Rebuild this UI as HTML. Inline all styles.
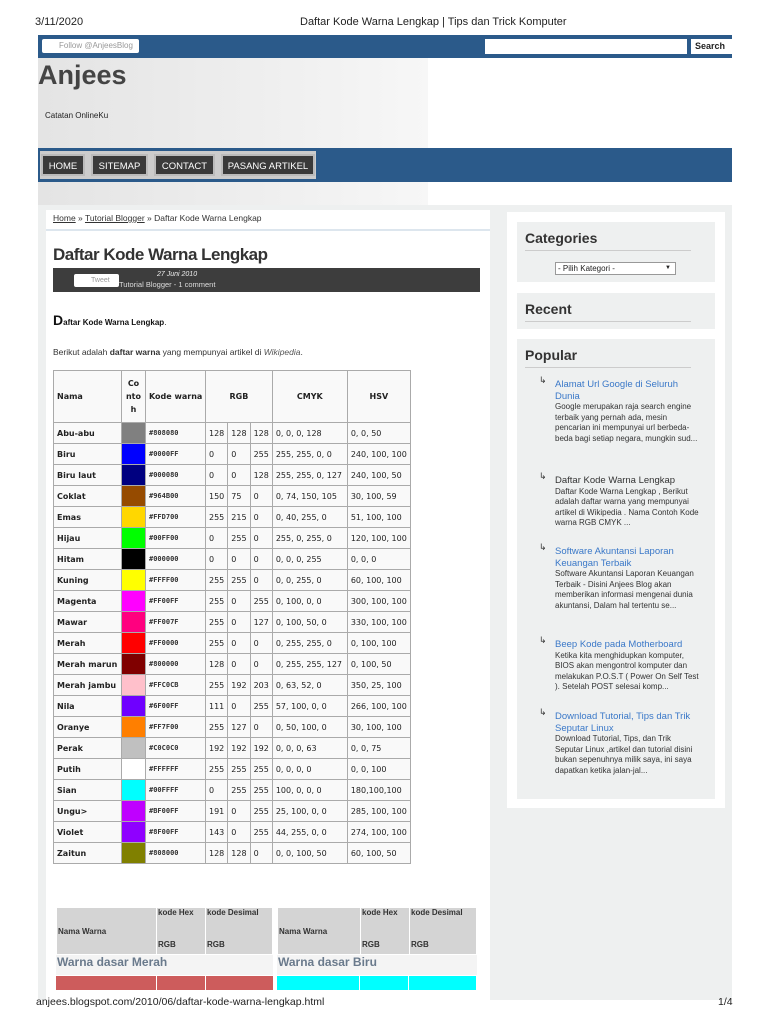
<!DOCTYPE html>
<html><head><meta charset="utf-8"><style>
*{margin:0;padding:0;box-sizing:border-box}
body{width:768px;height:1024px;background:#fff;font-family:"Liberation Sans",sans-serif;position:relative;overflow:hidden;color:#222}
.a{position:absolute}
.hdr{font-size:11px;top:16px}
#top{left:38px;top:35px;width:694px;height:23px;background:#2b5a8a}
#hbg{left:38px;top:58px;width:390px;height:147px;background:linear-gradient(90deg,#e4e4e4,#efefef 60%,#f7f7f7)}
#nav{left:38px;top:148px;width:694px;height:34px;background:#2b5a8a}
.nb{position:absolute;top:6px;height:22px;background:#3a3a3a;color:#fff;font-size:9.5px;line-height:22px;text-align:center;border:2px solid #bbb}
#main{left:38px;top:205px;width:694px;height:795px;background:#eef0f0}
#content{left:46px;top:210px;width:444px;height:790px;background:#fff}
#side{left:507px;top:212px;width:218px;height:596px;background:#fff}
.box{position:absolute;left:10px;width:198px;background:#eef0f0}
.box h3{font-size:14px;font-weight:bold;color:#333;margin:8px 0 0 8px;padding-bottom:4px;border-bottom:1px solid #ccc;width:166px}
table.c{position:absolute;left:53px;top:370px;border-collapse:collapse;font-family:"DejaVu Sans",sans-serif;font-size:8px;background:#f9f9f9}
table.c td{border:1px solid #aaa;height:21px;padding:0 3px;white-space:nowrap}
table.c td:first-child{font-weight:bold}
table.c th{border:1px solid #aaa;font-weight:bold;font-size:8px;height:52px}
.k{font-family:"DejaVu Sans Mono",monospace;font-size:7px;font-weight:bold;color:#333}
.p{position:absolute;left:38px;font-size:8px;color:#333;line-height:10.5px;width:145px}
.p b{display:block;font-weight:normal;color:#3a78c8;font-size:9.5px;line-height:11.5px}
.p i{position:absolute;left:-16px;top:-4px;font-style:normal;font-size:9px;color:#333}
.bt{position:absolute;border-collapse:collapse;font-size:8px;font-weight:bold;color:#333}
.bt td{background:#d4d4d4;border:1px solid #fff;vertical-align:middle;padding:0 1px}
</style></head><body>
<div class="a hdr" style="left:35px">3/11/2020</div>
<div class="a hdr" style="left:300px">Daftar Kode Warna Lengkap | Tips dan Trick Komputer</div>
<div class="a" id="top"></div>
<div class="a" style="left:42px;top:39px;width:97px;height:14px;background:#fff;border-radius:2px;font-size:8px;color:#999;line-height:14px;padding-left:17px">Follow @AnjeesBlog</div>
<div class="a" style="left:485px;top:39px;width:202px;height:15px;background:#fff"></div>
<div class="a" style="left:691px;top:39px;width:41px;height:15px;background:#fff;font-size:9px;font-weight:bold;line-height:15px;padding-left:4px">Search</div>
<div class="a" id="hbg"></div>
<div class="a" style="left:38px;top:60px;font-size:27px;font-weight:bold;color:#444">Anjees</div>
<div class="a" style="left:45px;top:111px;font-size:8px;color:#222">Catatan OnlineKu</div>
<div class="a" id="nav">
<div style="position:absolute;left:2px;top:3px;width:276px;height:28px;background:#ccc"></div>
<div class="nb" style="left:3px;width:44px">HOME</div>
<div class="nb" style="left:53px;width:57px">SITEMAP</div>
<div class="nb" style="left:116px;width:61px">CONTACT</div>
<div class="nb" style="left:183px;width:94px">PASANG ARTIKEL</div>
</div>
<div class="a" id="main"></div>
<div class="a" id="content"></div>
<div class="a" style="left:53px;top:213px;font-size:8.5px;color:#333"><u>Home</u> » <u>Tutorial Blogger</u> » Daftar Kode Warna Lengkap</div>
<div class="a" style="left:46px;top:229px;width:444px;height:2px;background:#dde6ee"></div>
<div class="a" style="left:53px;top:245px;font-size:17px;font-weight:bold;color:#333;letter-spacing:-0.5px">Daftar Kode Warna Lengkap</div>
<div class="a" style="left:53px;top:268px;width:427px;height:24px;background:#3d3d3d"></div>
<div class="a" style="left:74px;top:274px;width:45px;height:13px;background:#fff;border-radius:2px;font-size:7px;color:#999;padding-left:17px;line-height:13px">Tweet</div>
<div class="a" style="left:157px;top:271px;font-size:7px;color:#eee;font-style:italic">27 Juni 2010</div>
<div class="a" style="left:119px;top:280px;font-size:7.5px;color:#ddd">Tutorial Blogger - 1 comment</div>
<div class="a" style="left:53px;top:312px;font-size:8px;font-weight:bold;color:#111"><span style="font-size:14px">D</span>aftar Kode Warna Lengkap<span style="font-weight:normal">.</span></div>
<div class="a" style="left:53px;top:347px;font-size:8.5px;color:#333">Berikut adalah <b>daftar warna</b> yang mempunyai artikel di <i style="color:#555">Wikipedia</i>.</div>
<table class="c">
<tr><th style="width:68px;text-align:left;padding-left:3px">Nama</th><th style="width:24px;line-height:13px">Co<br>nto<br>h</th><th style="width:60px;text-align:left;padding-left:3px">Kode warna</th><th colspan="3" style="width:66px">RGB</th><th style="width:75px">CMYK</th><th style="width:62px">HSV</th></tr>
<tr><td>Abu-abu</td><td style="background:#808080"></td><td class="k">#808080</td><td>128</td><td>128</td><td>128</td><td>0, 0, 0, 128</td><td>0, 0, 50</td></tr>
<tr><td>Biru</td><td style="background:#0000ff"></td><td class="k">#0000FF</td><td>0</td><td>0</td><td>255</td><td>255, 255, 0, 0</td><td>240, 100, 100</td></tr>
<tr><td>Biru laut</td><td style="background:#000080"></td><td class="k">#000080</td><td>0</td><td>0</td><td>128</td><td>255, 255, 0, 127</td><td>240, 100, 50</td></tr>
<tr><td>Coklat</td><td style="background:#964b00"></td><td class="k">#964B00</td><td>150</td><td>75</td><td>0</td><td>0, 74, 150, 105</td><td>30, 100, 59</td></tr>
<tr><td>Emas</td><td style="background:#ffd700"></td><td class="k">#FFD700</td><td>255</td><td>215</td><td>0</td><td>0, 40, 255, 0</td><td>51, 100, 100</td></tr>
<tr><td>Hijau</td><td style="background:#00ff00"></td><td class="k">#00FF00</td><td>0</td><td>255</td><td>0</td><td>255, 0, 255, 0</td><td>120, 100, 100</td></tr>
<tr><td>Hitam</td><td style="background:#000"></td><td class="k">#000000</td><td>0</td><td>0</td><td>0</td><td>0, 0, 0, 255</td><td>0, 0, 0</td></tr>
<tr><td>Kuning</td><td style="background:#ffff00"></td><td class="k">#FFFF00</td><td>255</td><td>255</td><td>0</td><td>0, 0, 255, 0</td><td>60, 100, 100</td></tr>
<tr><td>Magenta</td><td style="background:#ff00ff"></td><td class="k">#FF00FF</td><td>255</td><td>0</td><td>255</td><td>0, 100, 0, 0</td><td>300, 100, 100</td></tr>
<tr><td>Mawar</td><td style="background:#ff007f"></td><td class="k">#FF007F</td><td>255</td><td>0</td><td>127</td><td>0, 100, 50, 0</td><td>330, 100, 100</td></tr>
<tr><td>Merah</td><td style="background:#ff0000"></td><td class="k">#FF0000</td><td>255</td><td>0</td><td>0</td><td>0, 255, 255, 0</td><td>0, 100, 100</td></tr>
<tr><td>Merah marun</td><td style="background:#800000"></td><td class="k">#800000</td><td>128</td><td>0</td><td>0</td><td>0, 255, 255, 127</td><td>0, 100, 50</td></tr>
<tr><td>Merah jambu</td><td style="background:#ffc0cb"></td><td class="k">#FFC0CB</td><td>255</td><td>192</td><td>203</td><td>0, 63, 52, 0</td><td>350, 25, 100</td></tr>
<tr><td>Nila</td><td style="background:#6f00ff"></td><td class="k">#6F00FF</td><td>111</td><td>0</td><td>255</td><td>57, 100, 0, 0</td><td>266, 100, 100</td></tr>
<tr><td>Oranye</td><td style="background:#ff7f00"></td><td class="k">#FF7F00</td><td>255</td><td>127</td><td>0</td><td>0, 50, 100, 0</td><td>30, 100, 100</td></tr>
<tr><td>Perak</td><td style="background:#c0c0c0"></td><td class="k">#C0C0C0</td><td>192</td><td>192</td><td>192</td><td>0, 0, 0, 63</td><td>0, 0, 75</td></tr>
<tr><td>Putih</td><td style="background:#fff"></td><td class="k">#FFFFFF</td><td>255</td><td>255</td><td>255</td><td>0, 0, 0, 0</td><td>0, 0, 100</td></tr>
<tr><td>Sian</td><td style="background:#00ffff"></td><td class="k">#00FFFF</td><td>0</td><td>255</td><td>255</td><td>100, 0, 0, 0</td><td>180,100,100</td></tr>
<tr><td>Ungu&gt;</td><td style="background:#bf00ff"></td><td class="k">#BF00FF</td><td>191</td><td>0</td><td>255</td><td>25, 100, 0, 0</td><td>285, 100, 100</td></tr>
<tr><td>Violet</td><td style="background:#8f00ff"></td><td class="k">#8F00FF</td><td>143</td><td>0</td><td>255</td><td>44, 255, 0, 0</td><td>274, 100, 100</td></tr>
<tr><td>Zaitun</td><td style="background:#808000"></td><td class="k">#808000</td><td>128</td><td>128</td><td>0</td><td>0, 0, 100, 50</td><td>60, 100, 50</td></tr>
</table>

<table class="bt" style="left:56px;top:907px">
<tr style="height:47px"><td style="width:100px">Nama Warna</td><td style="width:49px;vertical-align:top">kode Hex</td><td style="width:67px;vertical-align:top">kode Desimal</td></tr>
</table>
<div class="a" style="left:158px;top:940px;font-size:8px;font-weight:bold;color:#333">RGB</div>
<div class="a" style="left:207px;top:940px;font-size:8px;font-weight:bold;color:#333">RGB</div>
<table class="bt" style="left:277px;top:907px">
<tr style="height:47px"><td style="width:83px">Nama Warna</td><td style="width:49px;vertical-align:top">kode Hex</td><td style="width:67px;vertical-align:top">kode Desimal</td></tr>
</table>
<div class="a" style="left:362px;top:940px;font-size:8px;font-weight:bold;color:#333">RGB</div>
<div class="a" style="left:411px;top:940px;font-size:8px;font-weight:bold;color:#333">RGB</div>
<div class="a" style="left:56px;top:955px;width:217px;height:20px;background:#f4f4f4;font-size:12px;font-weight:bold;color:#6a7a8c;padding-left:1px">Warna dasar Merah</div>
<div class="a" style="left:277px;top:955px;width:200px;height:20px;background:#f4f4f4;font-size:12px;font-weight:bold;color:#6a7a8c;padding-left:1px">Warna dasar Biru</div>
<div class="a" style="left:56px;top:976px;width:100px;height:14px;background:#cd5c5c"></div>
<div class="a" style="left:157px;top:976px;width:48px;height:14px;background:#cd5c5c"></div>
<div class="a" style="left:206px;top:976px;width:67px;height:14px;background:#cd5c5c"></div>
<div class="a" style="left:277px;top:976px;width:82px;height:14px;background:#00ffff"></div>
<div class="a" style="left:360px;top:976px;width:48px;height:14px;background:#00ffff"></div>
<div class="a" style="left:409px;top:976px;width:67px;height:14px;background:#00ffff"></div>

<div class="a" id="side">
<div class="box" style="top:10px;height:60px"><h3>Categories</h3>
<div style="position:absolute;left:38px;top:40px;width:121px;height:13px;background:#fff;border:1px solid #999;font-size:8px;line-height:11px;padding-left:2px">- Pilih Kategori -<span style="position:absolute;right:4px;font-size:6px">▼</span></div></div>
<div class="box" style="top:81px;height:36px"><h3>Recent</h3></div>
<div class="box" style="top:127px;height:460px"><h3>Popular</h3>
<div class="p" style="top:40px"><i>↳</i><b>Alamat Url Google di Seluruh Dunia</b>Google merupakan raja search engine terbaik yang pernah ada, mesin pencarian ini mempunyai url berbeda-beda bagi setiap negara, mungkin sud...</div>
<div class="p" style="top:136px"><i>↳</i><b style="color:#333">Daftar Kode Warna Lengkap</b>Daftar Kode Warna Lengkap , Berikut adalah daftar warna yang mempunyai artikel di Wikipedia . Nama Contoh Kode warna RGB CMYK ...</div>
<div class="p" style="top:207px"><i>↳</i><b>Software Akuntansi Laporan Keuangan Terbaik</b>Software Akuntansi Laporan Keuangan Terbaik - Disini Anjees Blog akan memberikan informasi mengenai dunia akuntansi, Dalam hal tertentu se...</div>
<div class="p" style="top:300px"><i>↳</i><b>Beep Kode pada Motherboard</b>Ketika kita menghidupkan komputer, BIOS akan mengontrol komputer dan melakukan P.O.S.T ( Power On Self Test ). Setelah POST selesai komp...</div>
<div class="p" style="top:372px"><i>↳</i><b>Download Tutorial, Tips dan Trik Seputar Linux</b>Download Tutorial, Tips, dan Trik Seputar Linux ,artikel dan tutorial disini bukan sepenuhnya milik saya, ini saya dapatkan ketika jalan-jal...</div>
</div>
</div>
<div class="a" style="left:36px;top:996px;font-size:10.5px">anjees.blogspot.com/2010/06/daftar-kode-warna-lengkap.html</div>
<div class="a" style="left:718px;top:996px;font-size:10.5px">1/4</div>
</body></html>
